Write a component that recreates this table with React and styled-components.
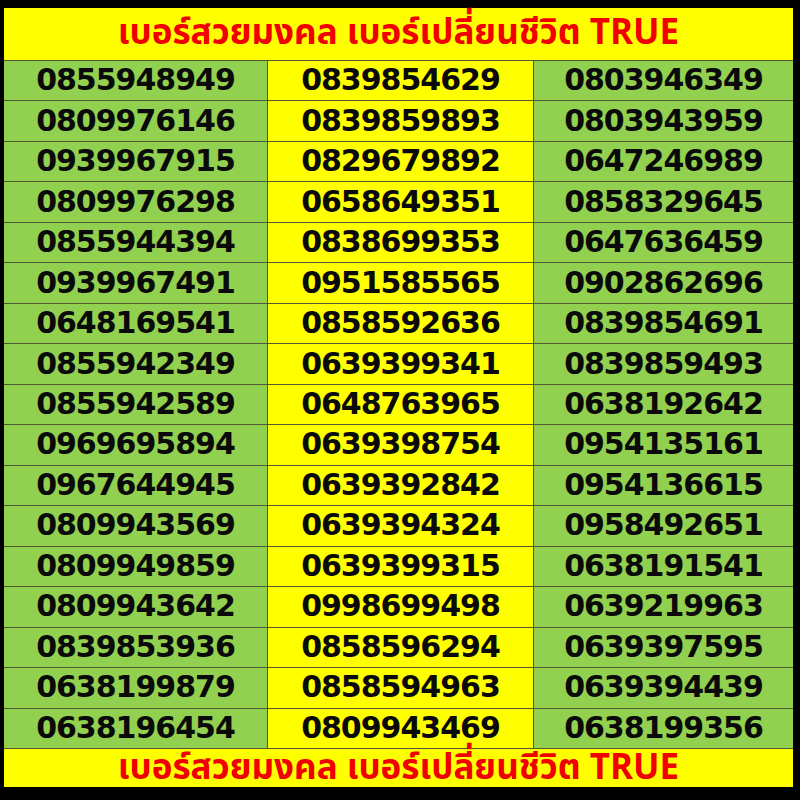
import React from 'react';
import styled, { createGlobalStyle } from 'styled-components';

const GlobalStyle = createGlobalStyle`
  html, body {
    margin: 0;
    padding: 0;
    background: #000;
  }
`;

const TITLE = 'เบอร์สวยมงคล เบอร์เปลี่ยนชีวิต TRUE';

const columns = [
  [
    '0855948949', '0809976146', '0939967915', '0809976298', '0855944394',
    '0939967491', '0648169541', '0855942349', '0855942589', '0969695894',
    '0967644945', '0809943569', '0809949859', '0809943642', '0839853936',
    '0638199879', '0638196454',
  ],
  [
    '0839854629', '0839859893', '0829679892', '0658649351', '0838699353',
    '0951585565', '0858592636', '0639399341', '0648763965', '0639398754',
    '0639392842', '0639394324', '0639399315', '0998699498', '0858596294',
    '0858594963', '0809943469',
  ],
  [
    '0803946349', '0803943959', '0647246989', '0858329645', '0647636459',
    '0902862696', '0839854691', '0839859493', '0638192642', '0954135161',
    '0954136615', '0958492651', '0638191541', '0639219963', '0639397595',
    '0639394439', '0638199356',
  ],
];

const Page = styled.div`
  width: 800px;
  height: 800px;
  box-sizing: border-box;
  padding: 8px 7px 13px 4px;
  background: #000;
`;

const Board = styled.div`
  display: grid;
  grid-template-columns: 263px 265px 1fr;
  grid-template-rows: 52px repeat(17, 1fr) 38px;
  gap: 1px;
  height: 100%;
  background: #4f5a34;
`;

const Banner = styled.div`
  grid-column: 1 / -1;
  display: flex;
  align-items: center;
  justify-content: center;
  background: #ffff00;
  color: #f00000;
  font-family: Tahoma, "Noto Sans Thai", "Noto Sans", "DejaVu Sans", sans-serif;
  font-weight: 700;
  font-size: 35px;
  line-height: 1;
  padding-bottom: ${(p) => (p.bottom ? '0' : '2px')};
`;

const Cell = styled.div`
  display: flex;
  align-items: center;
  justify-content: center;
  background: ${(p) => (p.yellow ? '#ffff00' : '#92d050')};
  color: #0a0a0a;
  font-family: "DejaVu Sans", Verdana, sans-serif;
  font-weight: 700;
  font-size: 30px;
  letter-spacing: -1px;
  padding-bottom: 2px;
`;

export default function App() {
  const rows = columns[0].map((_, i) => columns.map((col) => col[i]));
  return (
    <>
      <GlobalStyle />
      <Page>
        <Board>
          <Banner>{TITLE}</Banner>
          {rows.map((row, i) =>
            row.map((num, j) => (
              <Cell key={`${i}-${j}`} yellow={j === 1}>
                {num}
              </Cell>
            ))
          )}
          <Banner bottom>{TITLE}</Banner>
        </Board>
      </Page>
    </>
  );
}
